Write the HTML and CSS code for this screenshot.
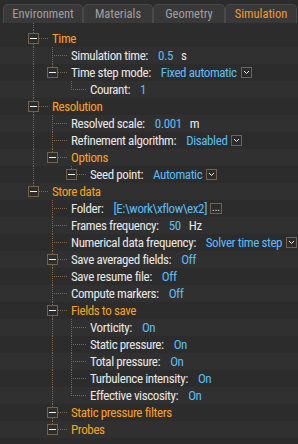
FILE: index.html
```html
<!DOCTYPE html>
<html lang="en">
<head>
    <meta charset="UTF-8">
    <meta name="viewport" content="width=device-width, initial-scale=1.0">
    <title>Simulation settings</title>
    <link rel="stylesheet" href="styles.css">
</head>
<body>
    <div class="panel">
        <div class="tabs">
            <div class="tab">Environment</div>
            <div class="tab">Materials</div>
            <div class="tab">Geometry</div>
            <div class="tab active">Simulation</div>
        </div>
        <div class="tree">
            <div class="row">
                <span class="guide tee"><span class="toggle"></span></span>
                <span class="cat">Time</span>
            </div>
            <div class="row">
                <span class="guide pipe"></span><span class="guide tee"></span>
                <span class="label">Simulation time:</span><span class="val">0.5</span><span class="unit">s</span>
            </div>
            <div class="row">
                <span class="guide pipe"></span><span class="guide end"><span class="toggle"></span></span>
                <span class="label">Time step mode:</span><span class="val">Fixed automatic</span>
                <svg class="drop" width="11" height="11" viewBox="0 0 11 11"><rect x="0.5" y="0.5" width="10" height="10"/><polyline points="3,4 5.5,6.5 8,4"/></svg>
            </div>
            <div class="row">
                <span class="guide pipe"></span><span class="guide"></span><span class="guide end"></span>
                <span class="label">Courant:</span><span class="val">1</span>
            </div>
            <div class="row">
                <span class="guide tee"><span class="toggle"></span></span>
                <span class="cat">Resolution</span>
            </div>
            <div class="row">
                <span class="guide pipe"></span><span class="guide tee"></span>
                <span class="label">Resolved scale:</span><span class="val">0.001</span><span class="unit">m</span>
            </div>
            <div class="row">
                <span class="guide pipe"></span><span class="guide tee"></span>
                <span class="label">Refinement algorithm:</span><span class="val">Disabled</span>
                <svg class="drop" width="11" height="11" viewBox="0 0 11 11"><rect x="0.5" y="0.5" width="10" height="10"/><polyline points="3,4 5.5,6.5 8,4"/></svg>
            </div>
            <div class="row">
                <span class="guide pipe"></span><span class="guide end"><span class="toggle"></span></span>
                <span class="cat">Options</span>
            </div>
            <div class="row">
                <span class="guide pipe"></span><span class="guide"></span><span class="guide end"><span class="toggle"></span></span>
                <span class="label">Seed point:</span><span class="val">Automatic</span>
                <svg class="drop" width="11" height="11" viewBox="0 0 11 11"><rect x="0.5" y="0.5" width="10" height="10"/><polyline points="3,4 5.5,6.5 8,4"/></svg>
            </div>
            <div class="row">
                <span class="guide end"><span class="toggle"></span></span>
                <span class="cat">Store data</span>
            </div>
            <div class="row">
                <span class="guide"></span><span class="guide tee"></span>
                <span class="label">Folder:</span><span class="val">[E:\work\xflow\ex2]</span><span class="browse">...</span>
            </div>
            <div class="row">
                <span class="guide"></span><span class="guide tee"></span>
                <span class="label">Frames frequency:</span><span class="val">50</span><span class="unit">Hz</span>
            </div>
            <div class="row">
                <span class="guide"></span><span class="guide tee"></span>
                <span class="label">Numerical data frequency:</span><span class="val">Solver time step</span>
                <svg class="drop" width="11" height="11" viewBox="0 0 11 11"><rect x="0.5" y="0.5" width="10" height="10"/><polyline points="3,4 5.5,6.5 8,4"/></svg>
            </div>
            <div class="row">
                <span class="guide"></span><span class="guide tee"><span class="toggle"></span></span>
                <span class="label">Save averaged fields:</span><span class="val">Off</span>
            </div>
            <div class="row">
                <span class="guide"></span><span class="guide tee"></span>
                <span class="label">Save resume file:</span><span class="val">Off</span>
            </div>
            <div class="row">
                <span class="guide"></span><span class="guide tee"></span>
                <span class="label">Compute markers:</span><span class="val">Off</span>
            </div>
            <div class="row">
                <span class="guide"></span><span class="guide tee"><span class="toggle"></span></span>
                <span class="cat">Fields to save</span>
            </div>
            <div class="row">
                <span class="guide"></span><span class="guide pipe"></span><span class="guide tee"></span>
                <span class="label">Vorticity:</span><span class="val">On</span>
            </div>
            <div class="row">
                <span class="guide"></span><span class="guide pipe"></span><span class="guide tee"></span>
                <span class="label">Static pressure:</span><span class="val">On</span>
            </div>
            <div class="row">
                <span class="guide"></span><span class="guide pipe"></span><span class="guide tee"></span>
                <span class="label">Total pressure:</span><span class="val">On</span>
            </div>
            <div class="row">
                <span class="guide"></span><span class="guide pipe"></span><span class="guide tee"></span>
                <span class="label">Turbulence intensity:</span><span class="val">On</span>
            </div>
            <div class="row">
                <span class="guide"></span><span class="guide pipe"></span><span class="guide end"></span>
                <span class="label">Effective viscosity:</span><span class="val">On</span>
            </div>
            <div class="row">
                <span class="guide"></span><span class="guide tee"><span class="toggle"></span></span>
                <span class="cat">Static pressure filters</span>
            </div>
            <div class="row">
                <span class="guide"></span><span class="guide end"><span class="toggle"></span></span>
                <span class="cat">Probes</span>
            </div>
        </div>
    </div>
</body>
</html>
```

FILE: styles.css
```css
body {
    margin: 0;
    background-color: #2c2c2c;
    font-family: "Roboto Condensed", "Noto Sans Condensed", "DejaVu Sans Condensed", "Liberation Sans Narrow", "Noto Sans", sans-serif;
    font-stretch: condensed;
    font-size: 12px;
    color: #e4e4e4;
}
.panel {
    width: 298px;
    height: 444px;
    overflow: hidden;
}
.tabs {
    display: grid;
    grid-template-columns: 80px 70px 72px 72px;
    height: 19px;
    padding: 4px 0 0 3px;
}
.tab {
    background-color: #393939;
    border: 1px solid #4a4a4a;
    border-bottom: none;
    border-radius: 5px 5px 0 0;
    color: #a0a0a0;
    font-size: 12.5px;
    line-height: 18px;
    text-align: center;
    white-space: nowrap;
}
.tab.active {
    color: #f39a26;
}
.tree {
    padding-top: 7px;
    font-size: 13px;
    letter-spacing: -0.4px;
    background: repeating-linear-gradient(to bottom, #7c6850 0 1px, transparent 1px 2px) 33px 0 / 1px 7px no-repeat;
}
.row {
    display: flex;
    align-items: center;
    height: 17px;
    padding-left: 24px;
    white-space: nowrap;
}
.row:nth-child(even) {
    background-color: #303030;
}
.guide {
    flex: none;
    display: flex;
    align-items: center;
    width: 19px;
    height: 17px;
    padding-left: 4px;
    box-sizing: border-box;
}
.guide.pipe {
    background: repeating-linear-gradient(to bottom, #7c6850 0 1px, transparent 1px 2px) 9px 0 / 1px 17px no-repeat;
}
.guide.tee,
.guide.end {
    width: 28px;
    background:
        repeating-linear-gradient(to right, #7c6850 0 1px, transparent 1px 2px) 11px 8px / 13px 1px no-repeat,
        repeating-linear-gradient(to bottom, #7c6850 0 1px, transparent 1px 2px) 9px 0 / 1px 17px no-repeat;
}
.guide.end {
    background-size: 13px 1px, 1px 9px;
}
.toggle {
    width: 11px;
    height: 11px;
    box-sizing: border-box;
    border: 1px solid #76624b;
    background: linear-gradient(#f0f0f0, #f0f0f0) center / 7px 1px no-repeat, #2d2d2d;
}
.cat {
    color: #f8a51c;
}
.label {
    color: #e8e8e8;
}
.val {
    color: #5cbcf4;
    margin-left: 10px;
}
.unit {
    color: #e8e8e8;
    margin-left: 8px;
}
.drop {
    margin-left: 4px;
    flex: none;
}
.drop rect {
    fill: none;
    stroke: #76624b;
}
.drop polyline {
    fill: none;
    stroke: #f0f0f0;
    stroke-width: 1;
}
.browse {
    margin-left: 3px;
    width: 12px;
    height: 11px;
    box-sizing: border-box;
    border: 1px solid #76624b;
    color: #f0f0f0;
    font-size: 10px;
    letter-spacing: 0;
    line-height: 8px;
    text-align: center;
    overflow: hidden;
}
```
